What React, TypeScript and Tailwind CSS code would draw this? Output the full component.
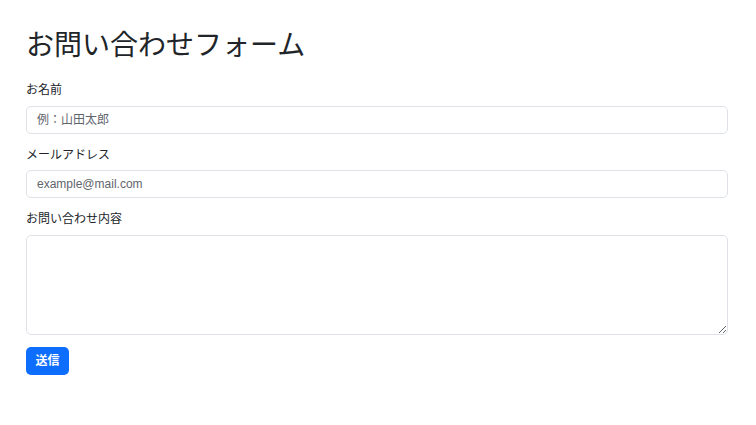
export default function App() {
  const fieldClass =
    "block w-full h-[28px] px-[10px] bg-white border border-[#dee2e6] rounded-[5px] text-[12px] text-[#212529] placeholder:text-[#5f656b] outline-none";

  return (
    <div
      className="min-h-screen bg-white pt-[29px] pl-[26px] pr-[28px] text-[#212529]"
      style={{ fontFamily: '"Liberation Sans", "Noto Sans CJK JP", sans-serif' }}
    >
      <h1 className="text-[28px] leading-[34px] font-normal mb-[18px]">
        お問い合わせフォーム
      </h1>

      <form onSubmit={(e) => e.preventDefault()}>
        <div className="mb-[12px]">
          <label className="block text-[12px] leading-[18px] mb-[7px]">お名前</label>
          <input placeholder="例：山田太郎" className={fieldClass} />
        </div>

        <div className="mb-[12px]">
          <label className="block text-[12px] leading-[18px] mb-[6px]">メールアドレス</label>
          <input type="email" placeholder="example@mail.com" className={fieldClass} />
        </div>

        <div className="mb-[12px]">
          <label className="block text-[12px] leading-[18px] mb-[7px]">お問い合わせ内容</label>
          <textarea className="block w-full h-[100px] px-[10px] py-[6px] bg-white border border-[#dee2e6] rounded-[5px] text-[12px] outline-none" />
        </div>

        <button
          type="submit"
          className="h-[28px] w-[43px] bg-[#0d6efd] text-white text-[12px] font-bold rounded-[5px]"
        >
          送信
        </button>
      </form>
    </div>
  );
}
